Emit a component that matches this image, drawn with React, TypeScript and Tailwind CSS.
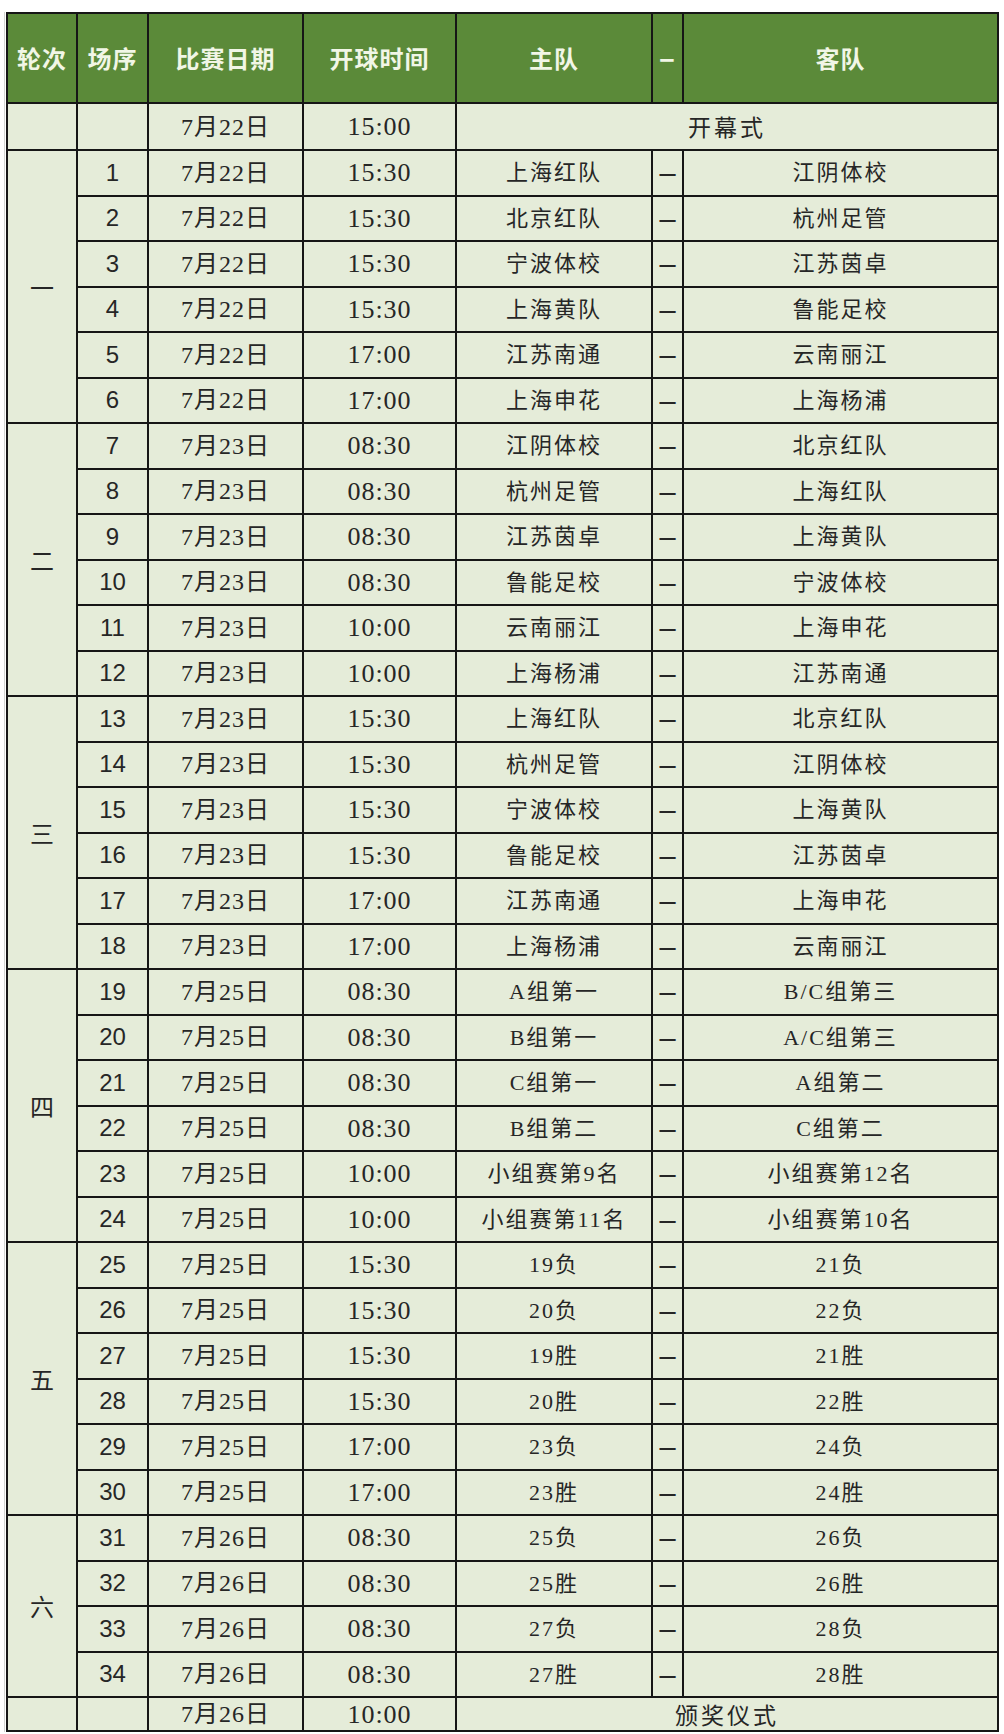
import { Fragment } from "react";

type Match = {
  no: number;
  date: string;
  time: string;
  home: string;
  away: string;
};

type Round = { label: string; matches: Match[] };

const m = (no: number, date: string, time: string, home: string, away: string): Match => ({
  no,
  date,
  time,
  home,
  away,
});

const rounds: Round[] = [
  {
    label: "一",
    matches: [
      m(1, "7月22日", "15:30", "上海红队", "江阴体校"),
      m(2, "7月22日", "15:30", "北京红队", "杭州足管"),
      m(3, "7月22日", "15:30", "宁波体校", "江苏茵卓"),
      m(4, "7月22日", "15:30", "上海黄队", "鲁能足校"),
      m(5, "7月22日", "17:00", "江苏南通", "云南丽江"),
      m(6, "7月22日", "17:00", "上海申花", "上海杨浦"),
    ],
  },
  {
    label: "二",
    matches: [
      m(7, "7月23日", "08:30", "江阴体校", "北京红队"),
      m(8, "7月23日", "08:30", "杭州足管", "上海红队"),
      m(9, "7月23日", "08:30", "江苏茵卓", "上海黄队"),
      m(10, "7月23日", "08:30", "鲁能足校", "宁波体校"),
      m(11, "7月23日", "10:00", "云南丽江", "上海申花"),
      m(12, "7月23日", "10:00", "上海杨浦", "江苏南通"),
    ],
  },
  {
    label: "三",
    matches: [
      m(13, "7月23日", "15:30", "上海红队", "北京红队"),
      m(14, "7月23日", "15:30", "杭州足管", "江阴体校"),
      m(15, "7月23日", "15:30", "宁波体校", "上海黄队"),
      m(16, "7月23日", "15:30", "鲁能足校", "江苏茵卓"),
      m(17, "7月23日", "17:00", "江苏南通", "上海申花"),
      m(18, "7月23日", "17:00", "上海杨浦", "云南丽江"),
    ],
  },
  {
    label: "四",
    matches: [
      m(19, "7月25日", "08:30", "A组第一", "B/C组第三"),
      m(20, "7月25日", "08:30", "B组第一", "A/C组第三"),
      m(21, "7月25日", "08:30", "C组第一", "A组第二"),
      m(22, "7月25日", "08:30", "B组第二", "C组第二"),
      m(23, "7月25日", "10:00", "小组赛第9名", "小组赛第12名"),
      m(24, "7月25日", "10:00", "小组赛第11名", "小组赛第10名"),
    ],
  },
  {
    label: "五",
    matches: [
      m(25, "7月25日", "15:30", "19负", "21负"),
      m(26, "7月25日", "15:30", "20负", "22负"),
      m(27, "7月25日", "15:30", "19胜", "21胜"),
      m(28, "7月25日", "15:30", "20胜", "22胜"),
      m(29, "7月25日", "17:00", "23负", "24负"),
      m(30, "7月25日", "17:00", "23胜", "24胜"),
    ],
  },
  {
    label: "六",
    matches: [
      m(31, "7月26日", "08:30", "25负", "26负"),
      m(32, "7月26日", "08:30", "25胜", "26胜"),
      m(33, "7月26日", "08:30", "27负", "28负"),
      m(34, "7月26日", "08:30", "27胜", "28胜"),
    ],
  },
];

const cell = "flex items-center justify-center bg-[#e5ecd9] text-[#262626]";
const serif = "font-['Liberation_Serif','Noto_Sans_CJK_SC',serif]";
const sans = "font-['Liberation_Sans','Noto_Sans_CJK_SC',sans-serif]";
const head =
  "flex items-center justify-center bg-[#5b8a39] text-[#f1f6e6] text-[24px] font-bold tracking-[1px] font-['Noto_Sans_CJK_SC',sans-serif]";

const DateCell = ({ v }: { v: string }) => (
  <div className={`${cell} ${serif} text-[24px] tracking-[1px]`}>{v}</div>
);

const TimeCell = ({ v }: { v: string }) => (
  <div className={`${cell} ${serif} text-[26px] tracking-[1px]`}>{v}</div>
);

const TeamCell = ({ v }: { v: string }) => (
  <div className={`${cell} ${serif} text-[22px] tracking-[2px]`}>{v}</div>
);

const Dash = () => (
  <div className={`${cell} ${sans} pt-[2px] text-[29px] leading-none`}>–</div>
);

export default function App() {
  return (
    <div className="min-h-screen bg-white pl-[4px] pt-[12px]">
      <div className="border-l border-[#d2d4d0] pl-[1px]">
        <div className="grid w-fit grid-cols-[68px_69px_153px_151px_194px_29px_313px] grid-rows-[88px_45px_repeat(34,43.5px)_32px] gap-[2px] bg-[#161616] p-[2px]">
          {/* header */}
          <div className={head}>轮次</div>
          <div className={head}>场序</div>
          <div className={head}>比赛日期</div>
          <div className={head}>开球时间</div>
          <div className={head}>主队</div>
          <div className={`${head} ${sans} pb-[4px] text-[30px] font-black`}>–</div>
          <div className={head}>客队</div>

          {/* opening */}
          <div className={cell} />
          <div className={cell} />
          <DateCell v="7月22日" />
          <TimeCell v="15:00" />
          <div className={`${cell} col-span-3 text-[23px] tracking-[3px] font-['Noto_Sans_CJK_SC',sans-serif]`}>
            开幕式
          </div>

          {rounds.map((r) => (
            <Fragment key={r.label}>
              <div
                className={`${cell} ${r.matches.length === 6 ? "row-span-6" : "row-span-4"} text-[24px] font-['Noto_Sans_CJK_SC',serif]`}
              >
                {r.label}
              </div>
              {r.matches.map((x) => (
                <Fragment key={x.no}>
                  <div className={`${cell} ${sans} text-[24px] text-[#333]`}>{x.no}</div>
                  <DateCell v={x.date} />
                  <TimeCell v={x.time} />
                  <TeamCell v={x.home} />
                  <Dash />
                  <TeamCell v={x.away} />
                </Fragment>
              ))}
            </Fragment>
          ))}

          {/* awards */}
          <div className={cell} />
          <div className={cell} />
          <DateCell v="7月26日" />
          <TimeCell v="10:00" />
          <div className={`${cell} col-span-3 text-[23px] tracking-[3px] font-['Noto_Sans_CJK_SC',sans-serif]`}>
            颁奖仪式
          </div>
        </div>
      </div>
    </div>
  );
}
